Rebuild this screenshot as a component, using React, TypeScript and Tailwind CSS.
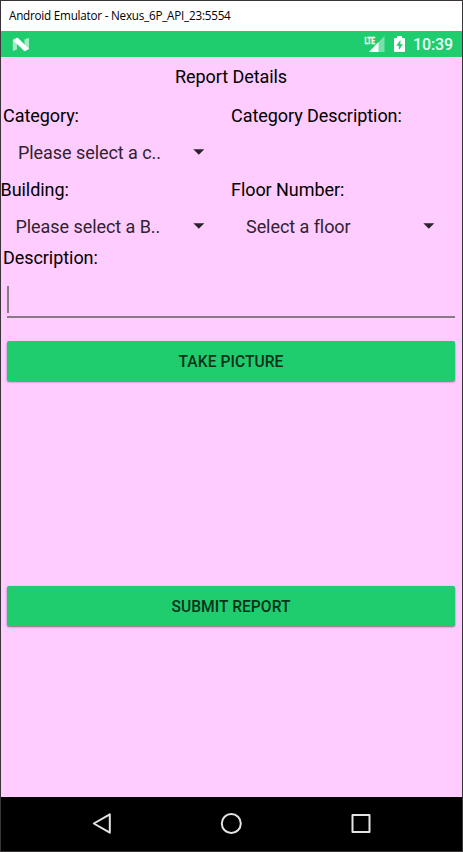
import type { ReactNode } from 'react';

function Label({ children, className = '' }: { children: ReactNode; className?: string }) {
  return <div className={`h-6 whitespace-nowrap text-[18px] leading-6 tracking-[-0.06px] text-black ${className}`}>{children}</div>;
}

function Spinner({ text, className = '' }: { text: string; className?: string }) {
  return (
    <div className={`flex h-6 items-center justify-between text-[18px] leading-6 tracking-[-0.06px] text-[#30232f] ${className}`}>
      <span className="whitespace-nowrap">{text}</span>
      <svg className="-mt-[2px] h-[6px] w-[12px]" viewBox="0 0 12 6">
        <path d="M0.300 0.200h11L5.800 5.800z" fill="#2b222b" />
      </svg>
    </div>
  );
}

function RaisedButton({ children, className = '' }: { children: ReactNode; className?: string }) {
  return (
    <button
      className={`ml-[6px] flex w-[448px] items-center justify-center rounded-[2px] bg-[#1fcd6f] pt-[3px] text-[15.6px] font-medium tracking-[0.05px] text-[#083319] shadow-[0_1px_2px_rgba(0,0,0,0.5)] ${className}`}
    >
      {children}
    </button>
  );
}

function StatusBar() {
  return (
    <div className="flex h-[26px] items-center bg-[#1fcd6f] pl-[11px] pr-[9px]">
      <svg className="h-[15px] w-[18px]" viewBox="0 0 18 15">
        <path d="M0.800 3L5 1v11.500L0.800 14zM12.500 2.500L17 0.800v11.500L12.500 14z" fill="#a5ebc5" />
        <path d="M0.800 3L5.500 0.600 17 11.800l-4.500 2.400z" fill="#fff" />
      </svg>
      <div className="ml-auto flex items-center">
        <svg className="h-[18px] w-[22px]" viewBox="0 0 22 18">
          <path d="M21.500 1v16H6z" fill="#78e1a9" />
          <path d="M15.500 7v10H6z" fill="#fff" />
          <path d="M0 0h12.500v9.500H0z" fill="#1fcd6f" />
          <text x="1.500" y="8.500" fontSize="9.500" fontWeight="700" fill="#fff" stroke="#fff" strokeWidth="0.300" textLength="10.500" lengthAdjust="spacingAndGlyphs">LTE</text>
        </svg>
        <svg className="ml-[9px] h-[16px] w-[11px]" viewBox="0 0 11 16">
          <path d="M3 0h5v2h2q1 0 1 1v12q0 1-1 1H1q-1 0-1-1V3q0-1 1-1h2z" fill="#fff" />
          <path d="M6.400 4L2.300 9.700h2.600V14l4-5.800H6.400z" fill="#1fcd6f" />
        </svg>
        <span className="ml-[8px] w-[40px] whitespace-nowrap pt-[2px] text-[16px] font-medium leading-[26px] tracking-[-0.1px] text-[#eefcf4]">10:39</span>
      </div>
    </div>
  );
}

export default function App() {
  return (
    <div className="flex h-[852px] w-[463px] flex-col overflow-hidden border border-[#3a343a] bg-white font-['Roboto',sans-serif]">
      <div className="flex h-[30px] items-center whitespace-nowrap pl-[8px] font-['Open_Sans',sans-serif] text-[11.7px] tracking-[-0.23px] text-black">
        Android Emulator - Nexus_6P_API_23:5554
      </div>
      <StatusBar />
      <main className="flex h-[740px] flex-col bg-[#ffccff] pt-[8px]">
        <Label className="-ml-px text-center">Report Details</Label>
        <div className="mt-[15px] grid grid-cols-2">
          <Label className="pl-[2px]">Category:</Label>
          <Label className="-ml-[0.5px]">Category Description:</Label>
        </div>
        <div className="mt-[13px] grid grid-cols-2">
          <Spinner text="Please select a c.." className="pl-[17px] pr-[27px]" />
        </div>
        <div className="mt-[13px] grid grid-cols-2">
          <Label className="-ml-[0.5px]">Building:</Label>
          <Label className="-ml-[0.5px]">Floor Number:</Label>
        </div>
        <div className="mt-[13px] grid grid-cols-2">
          <Spinner text="Please select a B.." className="pl-[14.5px] pr-[27px]" />
          <Spinner text="Select a floor" className="pl-[14.5px] pr-[27px]" />
        </div>
        <Label className="mt-[7px] pl-[2px]">Description:</Label>
        <div className="ml-[6px] mt-[16px] h-[32px] w-[448px] border-b-2 border-[#877a87]">
          <div className="h-[27px] w-[2px] bg-[#877a87]" />
        </div>
        <RaisedButton className="mt-[23px] h-[40px]">TAKE PICTURE</RaisedButton>
        <RaisedButton className="mt-[205px] h-[40px]">SUBMIT REPORT</RaisedButton>
      </main>
      <nav className="flex h-[54px] items-center justify-center bg-black">
        <svg className="h-[54px] w-[290px]" viewBox="0 0 290 54" fill="none" stroke="#e4e4e4" strokeWidth="2" strokeLinejoin="round">
          <path d="M22.800 17.300v18.400L6.800 26.500z" />
          <circle cx="144.300" cy="26.500" r="9.500" />
          <rect x="265.500" y="18" width="17" height="17" />
        </svg>
      </nav>
    </div>
  );
}
